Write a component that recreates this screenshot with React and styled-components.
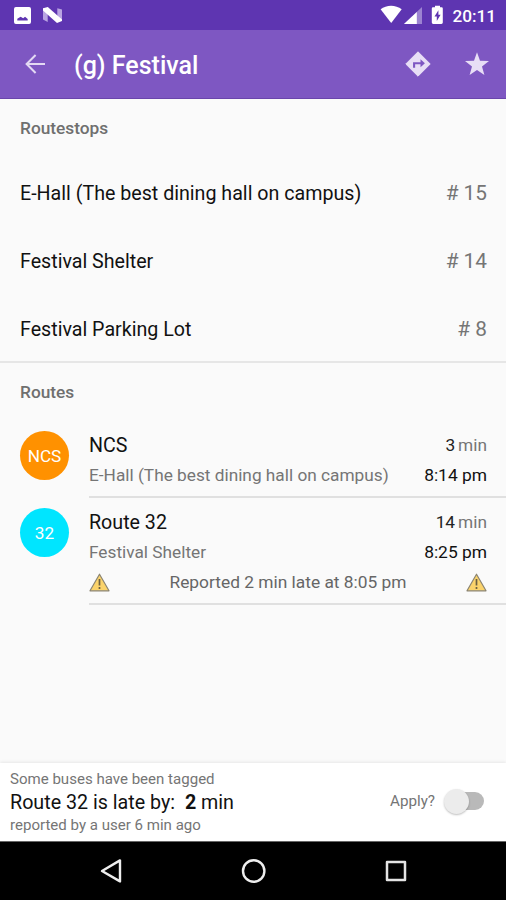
import React from 'react'
import { useState } from 'react'
import { styled, createGlobalStyle } from 'styled-components'

const stops = [
    { name: 'E-Hall (The best dining hall on campus)', number: 15 },
    { name: 'Festival Shelter', number: 14 },
    { name: 'Festival Parking Lot', number: 8 },
]

const routes = [
    {
        short: 'NCS',
        name: 'NCS',
        color: '#ff9100',
        stop: 'E-Hall (The best dining hall on campus)',
        wait: 3,
        time: '8:14 pm',
    },
    {
        short: '32',
        name: 'Route 32',
        color: '#00e5ff',
        stop: 'Festival Shelter',
        wait: 14,
        time: '8:25 pm',
        report: 'Reported 2 min late at 8:05 pm',
    },
]

const WarningIcon = () => (
    <svg width="21" height="19" viewBox="0 0 21 19">
        <path d="M10.5 1.2L20 17.8H1z" fill="#fbd36b" stroke="#8b8472" strokeWidth="1.2" strokeLinejoin="round" />
        <path d="M10.5 6v6.4M10.5 14v2" stroke="#6d6040" strokeWidth="1.7" />
    </svg>
)

const StatusIcons = () => (
    <>
        <NotificationIcons>
            <svg width="17" height="17" viewBox="0 0 18 18">
                <path fillRule="evenodd" fill="#fff" d="M2 0h14a2 2 0 0 1 2 2v14a2 2 0 0 1-2 2H2a2 2 0 0 1-2-2V2a2 2 0 0 1 2-2zM3.5 14.4h11V12.6l-2.8-2.2-2 1.6-2.7-1.8L3.5 12.4z" />
            </svg>
            <svg width="19" height="16" viewBox="0 0 19 16">
                <path d="M0 1.6l4.7 3.5v10L0 12.4zM14.3 1.3L19 2.6v11.2l-4.7-3z" fill="#b9a4e2" />
                <path d="M0 1.2L4.8 0 19 12.4v1.6L14 16 0 3.6z" fill="#fff" />
            </svg>
        </NotificationIcons>
        <SystemIcons>
            <svg width="64" height="20" viewBox="0 0 64 20">
                <path d="M.6 4.3C6.5-.4 15.6-.4 21.7 4.3L11.2 18z" fill="#fff" />
                <path d="M42 2v17H24z" fill="#9c83d1" />
                <path d="M36.8 7v12H24z" fill="#fff" />
                <path fillRule="evenodd" fill="#fff" d="M53.5 2.3H55V.7h5v1.6h1.6q1.2 0 1.2 1.2v14q0 1.4-1.4 1.4h-8.2q-1.4 0-1.4-1.4v-14q0-1.2 1.2-1.2zM58.4 5.3L54.5 11.5h2.3v4.6l3.8-6.3h-2.2z" />
            </svg>
            <Clock>20:11</Clock>
        </SystemIcons>
    </>
)

const RouteItem = ({ route }) => (
    <RouteRow>
        <RouteCircle $color={route.color}>{route.short}</RouteCircle>
        <RouteBody>
            <RouteLine>
                <RouteName>{route.name}</RouteName>
                <Wait><b>{route.wait}</b>min</Wait>
            </RouteLine>
            <RouteLine>
                <RouteStop>{route.stop}</RouteStop>
                <ArrivalTime>{route.time}</ArrivalTime>
            </RouteLine>
            {route.report && (
                <RouteLine>
                    <WarningIcon />
                    <Report>{route.report}</Report>
                    <WarningIcon />
                </RouteLine>
            )}
        </RouteBody>
    </RouteRow>
)

const App = () => {
    const [applied, setApplied] = useState(false)

    return (
        <Screen>
            <GlobalStyle />
            <StatusBar>
                <StatusIcons />
            </StatusBar>
            <Toolbar>
                <svg width="20" height="20" viewBox="0 0 20 20" fill="none" stroke="#e3d9f3" strokeWidth="2">
                    <path d="M20 10H1.8M10.6 1L1.6 10l9 9" />
                </svg>
                <Title>(g) Festival</Title>
                <svg width="26" height="26" viewBox="0 0 26 26">
                    <path d="M13 .8L25.2 13 13 25.2.8 13z" fill="#e8def6" stroke="#e8def6" strokeLinejoin="round" />
                    <path d="M9.1 16.8v-4.6h7.2" fill="none" stroke="#7e57c2" strokeWidth="2.1" />
                    <path d="M15.5 8.2l4.4 4-4.4 4z" fill="#7e57c2" />
                </svg>
                <StarIcon width="24" height="24" viewBox="0 0 24 24">
                    <path d="M12 .3l3 8.4 9 .3-7 5.4 2.4 8.5L12 18l-7.4 4.9L7 14.4 0 9l9-.3z" fill="#e8def6" />
                </StarIcon>
            </Toolbar>

            <StopSection>
                <SectionTitle>Routestops</SectionTitle>
                {stops.map((stop) => (
                    <StopRow key={stop.number}>
                        <StopName>{stop.name}</StopName>
                        <StopNumber># {stop.number}</StopNumber>
                    </StopRow>
                ))}
            </StopSection>

            <RouteSection>
                <SectionTitle>Routes</SectionTitle>
                {routes.map((route) => (
                    <RouteItem key={route.name} route={route} />
                ))}
            </RouteSection>

            <TagBar>
                <div>
                    <TagNote>Some buses have been tagged</TagNote>
                    <TagMain>Route 32 is late by:&nbsp; <b>2</b> min</TagMain>
                    <TagNote>reported by a user 6 min ago</TagNote>
                </div>
                <ApplyLabel>
                    Apply?
                    <Switch role="switch" aria-checked={applied} onClick={() => setApplied(!applied)}>
                        <Thumb $on={applied} />
                    </Switch>
                </ApplyLabel>
            </TagBar>

            <NavBar>
                <svg width="22" height="26" viewBox="0 0 22 26" fill="none" stroke="#eee" strokeWidth="2.4" strokeLinejoin="round">
                    <path d="M20 2.4v21L2 13z" />
                </svg>
                <svg width="26" height="26" viewBox="0 0 26 26" fill="none" stroke="#eee" strokeWidth="2.4">
                    <circle cx="12.7" cy="13" r="10.7" />
                </svg>
                <svg width="22" height="22" viewBox="0 0 22 22" fill="none" stroke="#e4e4e4" strokeWidth="2.5" strokeLinejoin="round">
                    <path d="M2 2h18v18H2z" />
                </svg>
            </NavBar>
        </Screen>
    )
}

const GlobalStyle = createGlobalStyle`
    body {
        margin: 0;
        font-family: Roboto, sans-serif;
    }
    * {
        box-sizing: border-box;
    }
    svg {
        display: block;
        flex: none;
    }
`

const Screen = styled.div`
    display: flex;
    flex-direction: column;
    width: 506px;
    height: 900px;
    background-color: #fafafa;
    white-space: nowrap;
    overflow: hidden;
`

const StatusBar = styled.div`
    display: flex;
    justify-content: space-between;
    flex: none;
    height: 30px;
    padding: 0 10px 0 14px;
    background-color: #5e35b1;
`

const NotificationIcons = styled.div`
    display: flex;
    align-items: center;
    gap: 12px;
`

const SystemIcons = styled.div`
    display: flex;
    align-items: center;
    gap: 8px;
`

const Clock = styled.span`
    color: #fff;
    font-size: 17.2px;
    font-weight: 500;
    line-height: 32px;
    padding-top: 1px;
`

const Toolbar = styled.div`
    display: flex;
    align-items: center;
    flex: none;
    height: 69px;
    padding: 0 17px 0 25px;
    background-color: #7e57c2;
    border-bottom: 1px solid #6a45ab;
`

const Title = styled.h1`
    flex: 1;
    margin: 3px 0 0 29px;
    color: #fff;
    font-size: 25px;
    font-weight: 500;
`

const StarIcon = styled.svg`
    margin-left: 34px;
`

const StopSection = styled.section`
    height: 264px;
    border-bottom: 2px solid #e6e6e6;
`

const RouteSection = styled.section`
    flex: 1;
`

const SectionTitle = styled.h2`
    height: 60px;
    margin: 0;
    padding-left: 20px;
    color: #6f6f6f;
    font-size: 17.3px;
    font-weight: 500;
    line-height: 59px;
`

const StopRow = styled.div`
    display: flex;
    align-items: center;
    justify-content: space-between;
    height: 68px;
    padding: 0 19px 0 20px;
`

const StopName = styled.span`
    color: #111;
    font-size: 19.65px;
`

const StopNumber = styled.span`
    color: #757575;
    font-size: 20.8px;
`

const RouteRow = styled.div`
    display: flex;
    align-items: flex-start;
    padding: 0 0 2px 20px;
`

const RouteCircle = styled.div`
    flex: none;
    width: 49px;
    height: 49px;
    margin-top: 8px;
    border-radius: 50%;
    background-color: ${(props) => props.$color};
    color: #fff;
    font-size: 17.2px;
    line-height: 51px;
    text-align: center;
`

const RouteBody = styled.div`
    flex: 1;
    margin-left: 20px;
    padding: 7px 19px 6px 0;
    border-bottom: 2px solid #e0e0e0;
`

const RouteLine = styled.div`
    display: flex;
    align-items: center;
    justify-content: space-between;
    height: 30px;
`

const RouteName = styled.span`
    color: #111;
    font-size: 19.65px;
`

const RouteStop = styled.span`
    color: #757575;
    font-size: 17.25px;
`

const Wait = styled.span`
    color: #757575;
    font-size: 17.3px;

    b {
        margin-right: 3px;
        color: #222;
        font-weight: 400;
    }
`

const ArrivalTime = styled.span`
    color: #111;
    font-size: 17.4px;
`

const Report = styled.span`
    color: #666;
    font-size: 17.35px;
`

const TagBar = styled.div`
    display: flex;
    justify-content: space-between;
    flex: none;
    height: 78px;
    padding: 5px 22px 0 10px;
    background-color: #fff;
    box-shadow: 0 -1px 3px rgba(0, 0, 0, 0.08);
`

const TagNote = styled.div`
    color: #757575;
    font-size: 15.05px;
    line-height: 23px;
`

const TagMain = styled.div`
    color: #111;
    font-size: 19.7px;
    line-height: 23px;

    b {
        font-weight: 700;
    }
`

const ApplyLabel = styled.div`
    display: flex;
    align-items: center;
    gap: 10px;
    padding-bottom: 7px;
    color: #757575;
    font-size: 15.2px;
`

const Switch = styled.button`
    display: flex;
    align-items: center;
    width: 39px;
    height: 18px;
    padding: 0;
    border: 0;
    border-radius: 9px;
    background-color: #b9b9b9;
`

const Thumb = styled.span`
    flex: none;
    width: 25px;
    height: 25px;
    margin-left: ${(props) => (props.$on ? '15px' : '-1px')};
    border-radius: 50%;
    background-color: #ececec;
    box-shadow: 0 1px 2px rgba(0, 0, 0, 0.25);
`

const NavBar = styled.div`
    display: flex;
    align-items: center;
    justify-content: space-between;
    flex: none;
    height: 59px;
    padding: 0 99px 0 100px;
    border-top: 1px solid #666;
    background-color: #000;
`

export default App
